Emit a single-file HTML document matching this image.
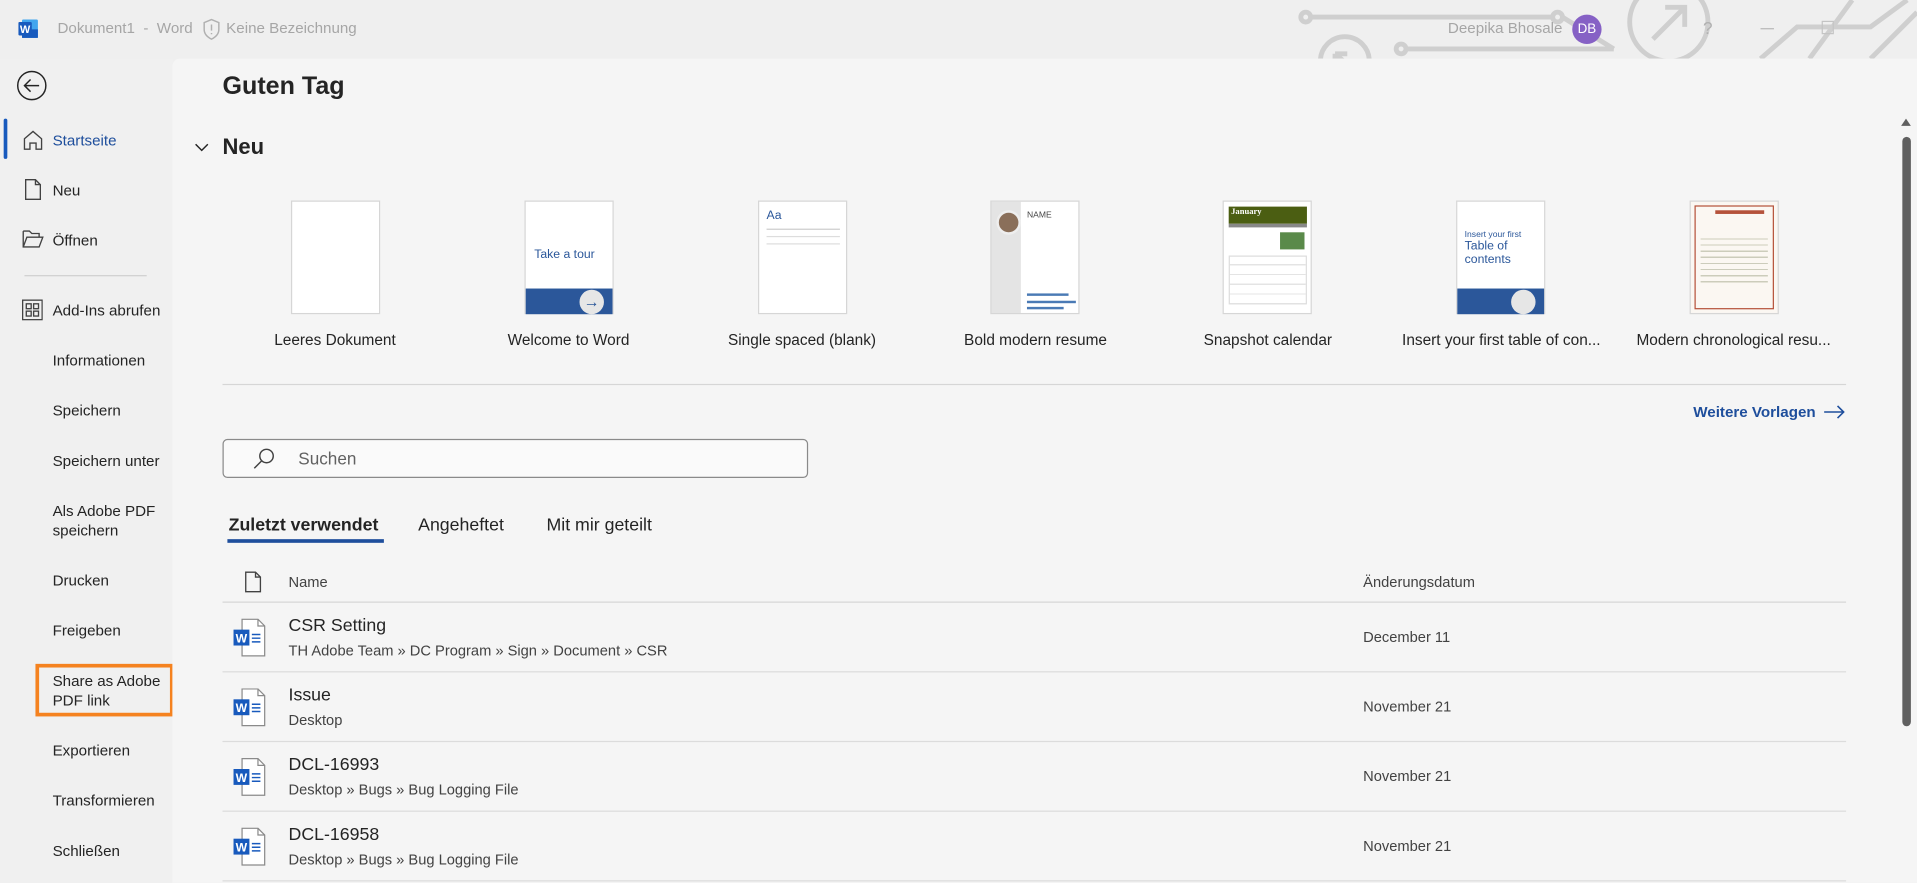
<!DOCTYPE html>
<html><head><meta charset="utf-8"><style>
*{margin:0;padding:0;box-sizing:border-box}
html,body{width:1917px;height:883px;overflow:hidden;background:#f0f0f0}
#w{position:absolute;left:0;top:0;width:1568px;height:722px;transform:scale(1.22258);transform-origin:0 0;font-family:"Segoe UI","Liberation Sans",sans-serif;color:#242424;background:#efefef}
.a{position:absolute;white-space:nowrap}
.side{position:absolute;left:0;top:48px;width:141px;height:674px;background:#f0f0f0}
.si{position:absolute;left:43px;font-size:12.4px;color:#242424;line-height:16px}
.main{position:absolute;left:141px;top:48px;width:1427px;height:674px;background:#f5f5f5;border-top-left-radius:6px}
.th{position:absolute;top:164px;width:73px;height:93px;background:#fff;border:1px solid #d6d6d6}
.tl{position:absolute;top:271px;font-size:12.6px;width:190px;text-align:center;color:#242424}
.row{position:absolute;left:182px;width:1328px;height:57px;border-bottom:1px solid #dcdcdc}
.t1{position:absolute;left:54px;top:11px;font-size:14.5px;color:#242424}
.t2{position:absolute;left:54px;top:32px;font-size:12px;color:#424242}
.dt{position:absolute;left:933px;top:21px;font-size:12px;color:#424242}
.wi{position:absolute;left:9px;top:13px}
</style></head><body><div id="w">
<svg class="a" style="left:1060px;top:0" width="508" height="48" viewBox="0 0 508 48" fill="none" stroke="#cfcfcf" stroke-width="4">
<circle cx="8" cy="14" r="4"/><path d="M12 14H210"/><circle cx="214" cy="14" r="4"/><path d="M218 14L260 40"/>
<circle cx="40" cy="50" r="20"/><path d="M32 44l14 12M32 44h10M32 44v10"/>
<circle cx="86" cy="40" r="4"/><path d="M90 40H260"/>
<circle cx="305" cy="18" r="32"/><path d="M292 32L318 6M302 6h16v16"/>
<path d="M380 48L410 22H470L500 0M420 48L455 0M470 48L508 10"/>
</svg>
<svg class="a" style="left:15px;top:15px" width="17" height="17" viewBox="0 0 17 17"><rect x="3" y="1" width="13" height="15" rx="1" fill="#41a5ee"/><rect x="3" y="9" width="13" height="7" fill="#185abd"/><rect x="0" y="3" width="11" height="11" rx="1" fill="#185abd"/><text x="5.5" y="12" font-size="9" font-weight="bold" fill="#fff" text-anchor="middle" font-family="Liberation Sans">W</text></svg>
<div class="a" style="left:47px;top:16px;font-size:12.4px;color:#a6a6a6">Dokument1&nbsp; - &nbsp;Word</div>
<svg class="a" style="left:165px;top:15px" width="16" height="18" viewBox="0 0 16 18" fill="none" stroke="#b0b0b0" stroke-width="1.2"><path d="M8 1L14 3.5V9c0 4-3 6.5-6 8-3-1.5-6-4-6-8V3.5z"/><path d="M8 5v5M8 12v1"/></svg>
<div class="a" style="left:185px;top:16px;font-size:12.4px;color:#a6a6a6">Keine Bezeichnung</div>
<div class="a" style="right:290px;top:16px;font-size:12.4px;color:#a6a6a6">Deepika Bhosale</div>
<div class="a" style="left:1286px;top:12px;width:24px;height:24px;border-radius:50%;background:#8661c5;color:#fff;font-size:11px;text-align:center;line-height:24px">DB</div>
<div class="a" style="left:1393px;top:15px;font-size:14px;color:#b0b0b0">?</div>
<div class="a" style="left:1440px;top:23px;width:11px;height:1px;background:#b8b8b8"></div>
<div class="a" style="left:1490px;top:17px;width:10px;height:11px;border:1px solid #c4c4c4"></div>
<div class="side"></div>
<svg class="a" style="left:13px;top:57px" width="26" height="26" viewBox="0 0 26 26" fill="none" stroke="#242424" stroke-width="1.2"><circle cx="13" cy="13" r="11.5"/><path d="M19 13H7M12 8l-5 5 5 5"/></svg>
<div class="a" style="left:3px;top:97px;width:3px;height:33px;background:#185abd;border-radius:2px"></div>
<svg class="a" style="left:18px;top:106px" width="18" height="17" viewBox="0 0 18 17" fill="none" stroke="#424242" stroke-width="1.1"><path d="M2 7.5L9 1.5l7 6V16h-4.5v-5h-5v5H2z"/></svg>
<div class="si" style="top:107px;color:#1e4e9c">Startseite</div>
<svg class="a" style="left:20px;top:146px" width="14" height="18" viewBox="0 0 14 18" fill="none" stroke="#424242" stroke-width="1.1"><path d="M1 1h8l4 4v12H1zM9 1v4h4"/></svg>
<div class="si" style="top:148px">Neu</div>
<svg class="a" style="left:18px;top:188px" width="18" height="15" viewBox="0 0 18 15" fill="none" stroke="#424242" stroke-width="1.1"><path d="M1 1h5l2 2h6v3M1 1v13h13l3-8H4L1 14"/></svg>
<div class="si" style="top:189px">Öffnen</div>
<div class="a" style="left:20px;top:225px;width:100px;height:1px;background:#d0d0d0"></div>
<svg class="a" style="left:18px;top:245px" width="17" height="17" viewBox="0 0 17 17" fill="none" stroke="#424242" stroke-width="1.1"><rect x=".5" y=".5" width="16" height="16"/><rect x="3.5" y="3.5" width="4" height="4"/><rect x="9.5" y="3.5" width="4" height="4"/><rect x="3.5" y="9.5" width="4" height="4"/><rect x="9.5" y="9.5" width="4" height="4"/></svg>
<div class="si" style="top:246px">Add-Ins abrufen</div>
<div class="si" style="top:287px">Informationen</div>
<div class="si" style="top:328px">Speichern</div>
<div class="si" style="top:369px">Speichern unter</div>
<div class="si" style="top:410px">Als Adobe PDF<br>speichern</div>
<div class="si" style="top:467px">Drucken</div>
<div class="si" style="top:508px">Freigeben</div>
<div class="a" style="left:29px;top:543px;width:113px;height:43px;border:3px solid #f5821f"></div>
<div class="si" style="top:549px">Share as Adobe<br>PDF link</div>
<div class="si" style="top:606px">Exportieren</div>
<div class="si" style="top:647px">Transformieren</div>
<div class="si" style="top:688px">Schließen</div>
<div class="main"></div>
<div class="a" style="left:182px;top:59px;font-size:20.5px;font-weight:600">Guten Tag</div>
<svg class="a" style="left:159px;top:117px" width="12" height="8" viewBox="0 0 12 8" fill="none" stroke="#242424" stroke-width="1.2"><path d="M1 1l5 5 5-5"/></svg>
<div class="a" style="left:182px;top:110px;font-size:18px;font-weight:600">Neu</div>
<div class="th" style="left:238px"></div>
<div class="th" style="left:429px"><div class="a" style="left:7px;top:38px;font-size:10px;color:#2b579a">Take a tour</div><div class="a" style="left:0;top:71px;width:71px;height:21px;background:#2b579a"></div><div class="a" style="left:44px;top:72px;width:20px;height:20px;border-radius:50%;background:#e6e6e6;color:#2b579a;font-size:13px;text-align:center;line-height:19px;font-weight:bold">→</div></div>
<div class="th" style="left:620px"><div class="a" style="left:6px;top:6px;font-size:10px;color:#2b579a">Aa</div><div class="a" style="left:6px;top:22px;width:60px;height:1px;background:#ccc"></div><div class="a" style="left:6px;top:28px;width:60px;height:1px;background:#ddd"></div><div class="a" style="left:6px;top:34px;width:60px;height:1px;background:#ddd"></div></div>
<div class="th" style="left:810px"><div class="a" style="left:0;top:0;width:24px;height:91px;background:#e4e4e4"></div><div class="a" style="left:4px;top:7px;width:20px;height:20px;border-radius:50%;background:#8a6f5a;border:2px solid #eee"></div><div class="a" style="left:29px;top:8px;font-size:7px;color:#444">NAME</div><div class="a" style="left:29px;top:75px;width:34px;height:2px;background:#4a7ab5"></div><div class="a" style="left:29px;top:81px;width:40px;height:2px;background:#4a7ab5"></div><div class="a" style="left:29px;top:86px;width:30px;height:2px;background:#4a7ab5"></div></div>
<div class="th" style="left:1000px"><div class="a" style="left:4px;top:4px;width:64px;height:14px;background:#4b5e12;color:#fff;font-size:7px;font-weight:bold;font-family:'Liberation Serif',serif;padding-left:2px">January</div><div class="a" style="left:4px;top:18px;width:64px;height:3px;background:#888"></div><div class="a" style="left:46px;top:25px;width:20px;height:14px;background:#5a8a4a"></div><div class="a" style="left:4px;top:44px;width:64px;height:40px;border:1px solid #ddd;background:repeating-linear-gradient(0deg,#fff 0 7px,#e4e4e4 7px 8px)"></div></div>
<div class="th" style="left:1191px"><div class="a" style="left:6px;top:24px;font-size:7px;color:#2b579a">Insert your first</div><div class="a" style="left:6px;top:31px;font-size:10px;line-height:11px;color:#2b579a">Table of<br>contents</div><div class="a" style="left:0;top:71px;width:71px;height:21px;background:#2b579a"></div><div class="a" style="left:44px;top:72px;width:20px;height:20px;border-radius:50%;background:#e6e6e6"></div></div>
<div class="th" style="left:1382px;background:#fbf7f2"><div class="a" style="left:3px;top:3px;width:65px;height:85px;border:1px solid #b5523b"></div><div class="a" style="left:20px;top:7px;width:40px;height:3px;background:#b5523b"></div><div class="a" style="left:8px;top:30px;width:55px;height:40px;background:repeating-linear-gradient(0deg,#fbf7f2 0 4px,#ccb 4px 5px)"></div></div>
<div class="tl" style="left:179px">Leeres Dokument</div>
<div class="tl" style="left:370px">Welcome to Word</div>
<div class="tl" style="left:561px">Single spaced (blank)</div>
<div class="tl" style="left:752px">Bold modern resume</div>
<div class="tl" style="left:942px">Snapshot calendar</div>
<div class="tl" style="left:1133px">Insert your first table of con...</div>
<div class="tl" style="left:1323px">Modern chronological resu...</div>
<div class="a" style="left:182px;top:314px;width:1328px;height:1px;background:#d6d6d6"></div>
<div class="a" style="left:1385px;top:330px;font-size:12.4px;font-weight:600;color:#1e4e9c">Weitere Vorlagen</div>
<svg class="a" style="left:1492px;top:331px" width="17" height="12" viewBox="0 0 17 12" fill="none" stroke="#1e4e9c" stroke-width="1.3"><path d="M0 6h16M11 1l5 5-5 5"/></svg>
<div class="a" style="left:182px;top:359px;width:479px;height:32px;border:1px solid #8a8a8a;border-radius:4px;background:#fafafa"></div>
<svg class="a" style="left:207px;top:366px" width="18" height="18" viewBox="0 0 18 18" fill="none" stroke="#424242" stroke-width="1.2"><circle cx="11" cy="7" r="5.5"/><path d="M7 11l-6 6"/></svg>
<div class="a" style="left:244px;top:367px;font-size:14px;color:#616161">Suchen</div>
<div class="a" style="left:187px;top:422px;font-size:14.5px;font-weight:600">Zuletzt verwendet</div>
<div class="a" style="left:186px;top:441px;width:128px;height:3px;background:#1e4e9c"></div>
<div class="a" style="left:342px;top:422px;font-size:14.5px">Angeheftet</div>
<div class="a" style="left:447px;top:422px;font-size:14.5px">Mit mir geteilt</div>
<svg class="a" style="left:200px;top:467px" width="14" height="18" viewBox="0 0 14 18" fill="none" stroke="#424242" stroke-width="1.1"><path d="M1 1h8l4 4v12H1zM9 1v4h4"/></svg>
<div class="a" style="left:236px;top:469px;font-size:12px;color:#424242">Name</div>
<div class="a" style="left:1115px;top:469px;font-size:12px;color:#424242">Änderungsdatum</div>
<div class="a" style="left:182px;top:492px;width:1328px;height:1px;background:#d6d6d6"></div>
<svg width="0" height="0" style="position:absolute"><defs><g id="wd"><path d="M7 .5h13l5.5 5.5v24.5H7z" fill="#fff" stroke="#8a8a8a"/><path d="M20 .5v5.5h5.5" fill="none" stroke="#8a8a8a"/><path d="M15 13h7M15 16h7M15 19h7" stroke="#185abd" stroke-width="1.2"/><rect x="0" y="9" width="13" height="13" fill="#185abd"/><text x="6.5" y="19.5" font-size="10" font-weight="bold" fill="#fff" text-anchor="middle" font-family="Liberation Sans">W</text></g></defs></svg>
<div class="row" style="top:493px"><svg class="wi" width="27" height="32"><use href="#wd"/></svg><div class="t1">CSR Setting</div><div class="t2">TH Adobe Team » DC Program » Sign » Document » CSR</div><div class="dt">December 11</div></div>
<div class="row" style="top:550px"><svg class="wi" width="27" height="32"><use href="#wd"/></svg><div class="t1">Issue</div><div class="t2">Desktop</div><div class="dt">November 21</div></div>
<div class="row" style="top:607px"><svg class="wi" width="27" height="32"><use href="#wd"/></svg><div class="t1">DCL-16993</div><div class="t2">Desktop » Bugs » Bug Logging File</div><div class="dt">November 21</div></div>
<div class="row" style="top:664px"><svg class="wi" width="27" height="32"><use href="#wd"/></svg><div class="t1">DCL-16958</div><div class="t2">Desktop » Bugs » Bug Logging File</div><div class="dt">November 21</div></div>
<svg class="a" style="left:1554px;top:96px" width="10" height="8" viewBox="0 0 10 8"><path d="M1 7L5 1l4 6z" fill="#606060"/></svg>
<div class="a" style="left:1556px;top:112px;width:7px;height:482px;background:#606060;border-radius:4px"></div>
</div></body></html>
